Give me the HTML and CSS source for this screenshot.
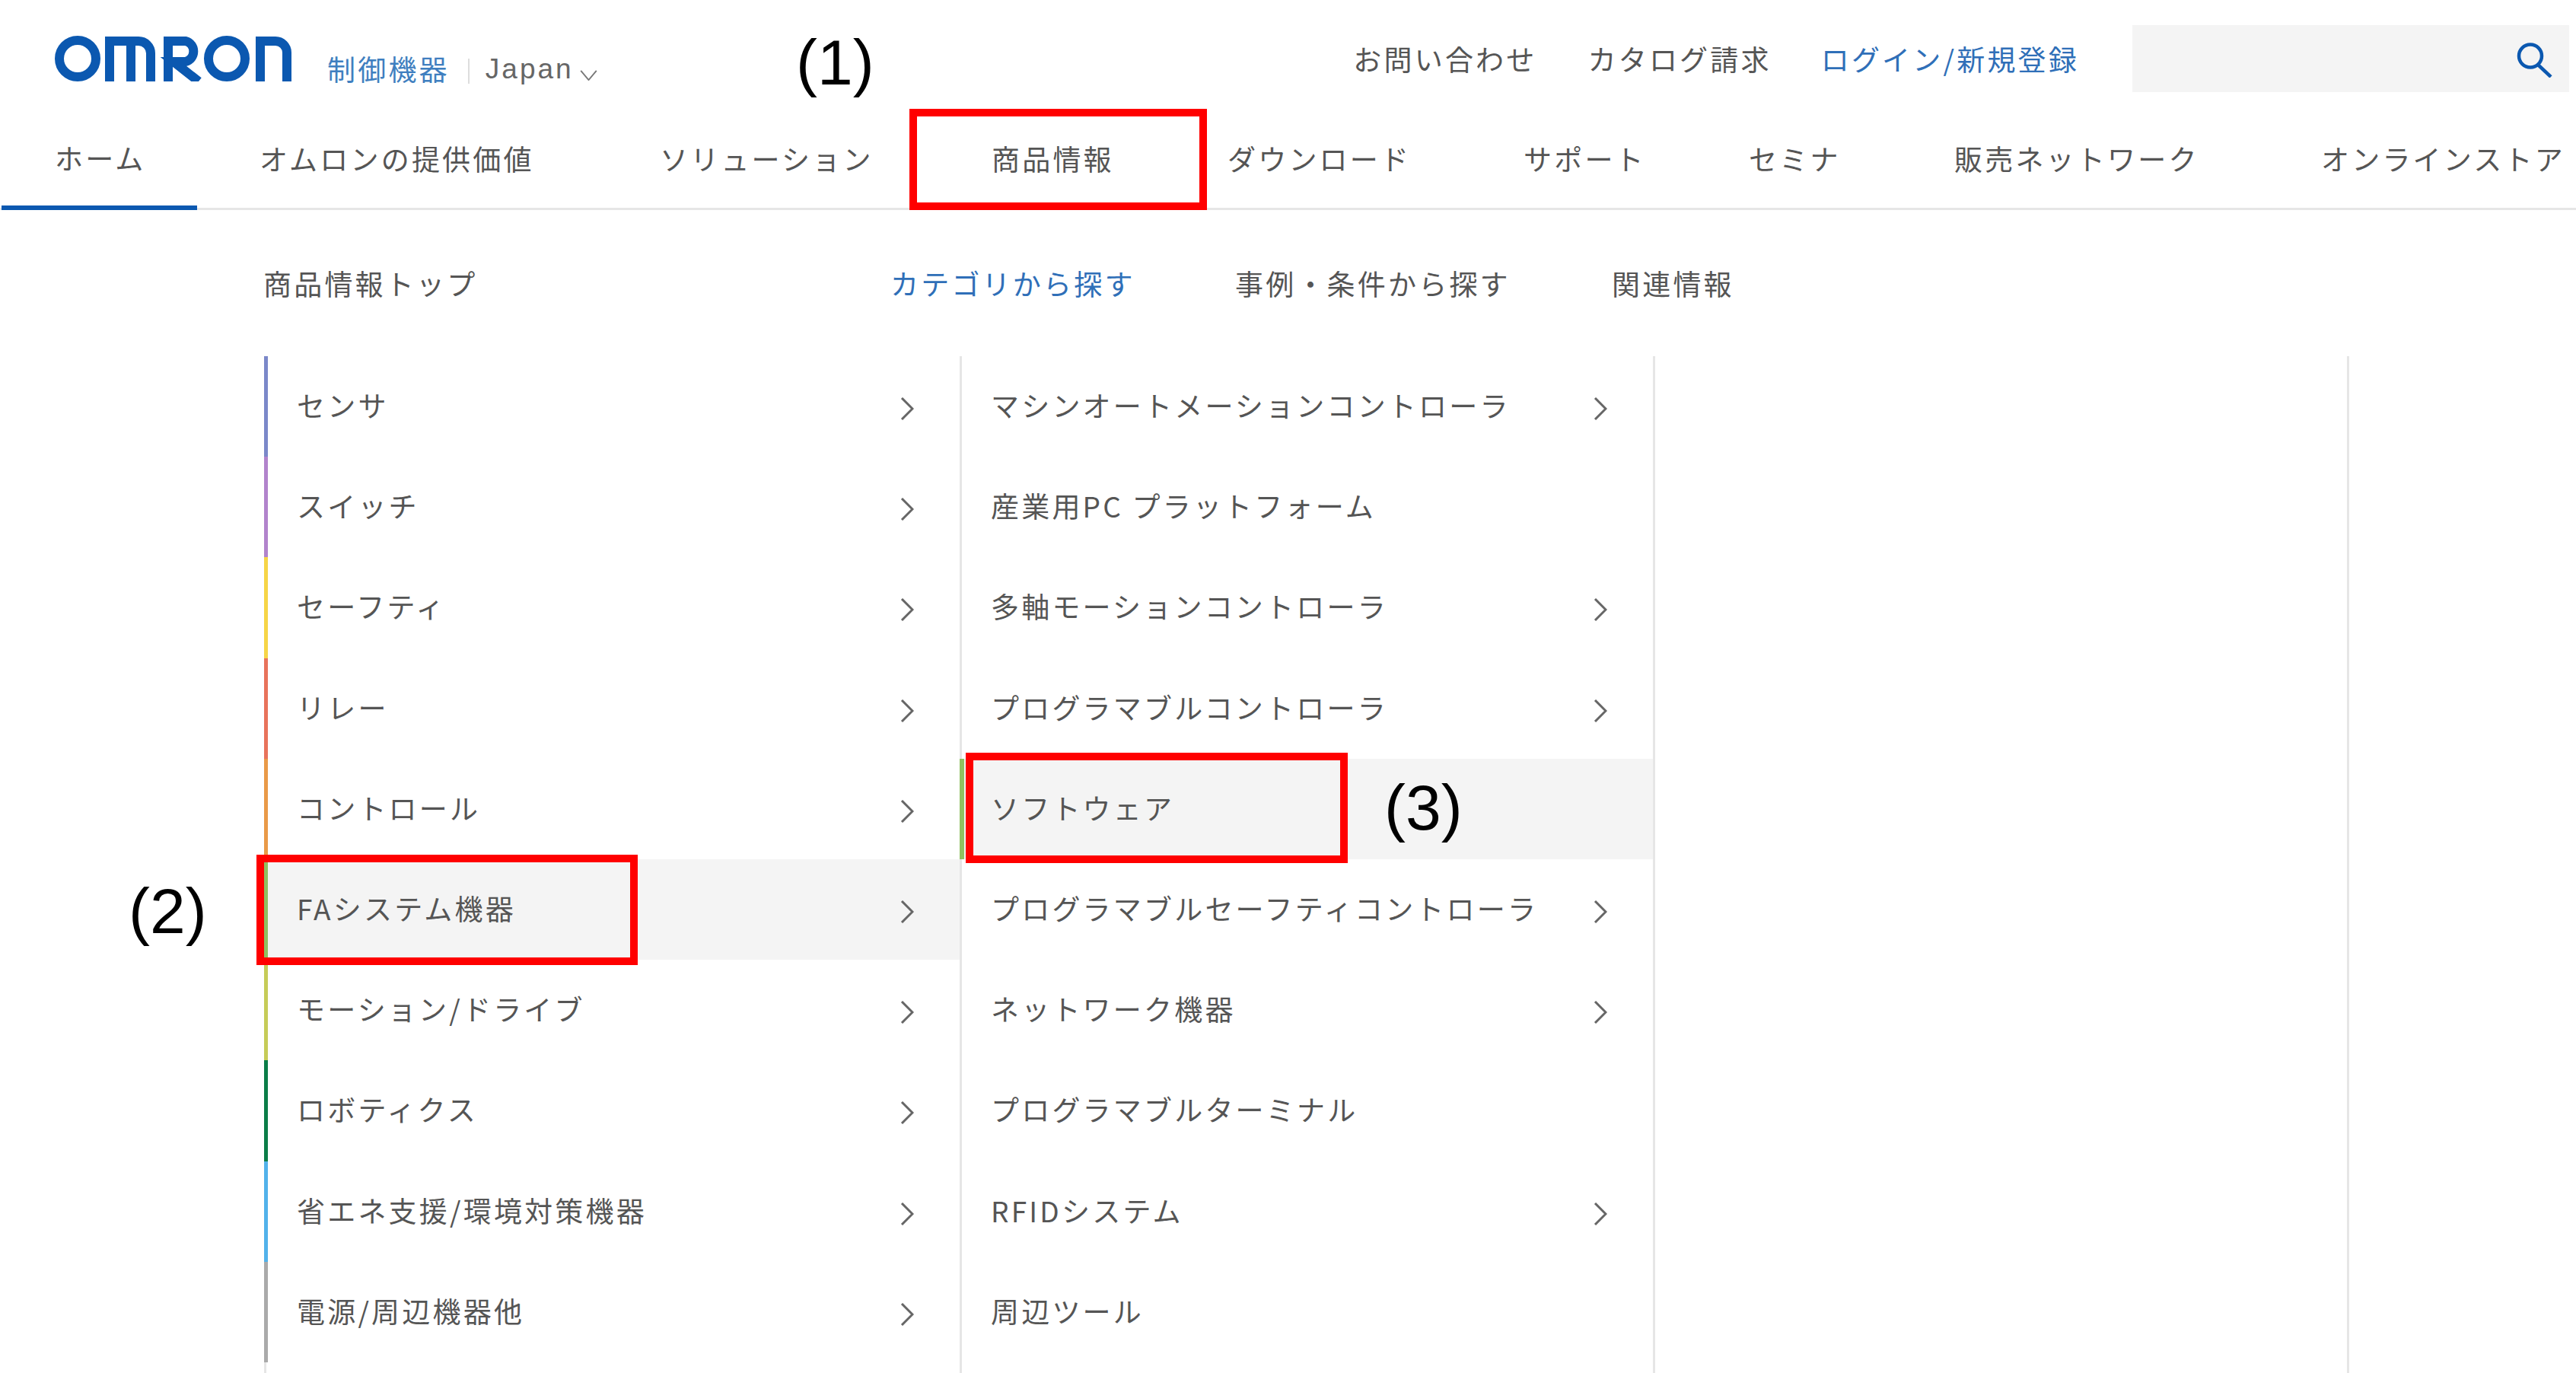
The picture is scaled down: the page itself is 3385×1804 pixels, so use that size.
FILE: index.html
```html
<!DOCTYPE html>
<html lang="ja">
<head>
<meta charset="utf-8">
<title>OMRON 制御機器</title>
<link rel="stylesheet" href="styles.css">
</head>
<body>
<div class="page">
  <header class="top">
    <div class="brand">
      <svg class="logo" viewBox="0 0 312 60" aria-label="OMRON">
        <g fill="none" stroke="#0b58b0" stroke-width="12">
          <circle cx="30" cy="30" r="24"/>
          <path d="M72 60V7H110a16 16 0 0 1 16 16V60M100 7V60"/>
          <path d="M149 60V7H172a14 14 0 0 1 0 27H156L189 60"/>
          <circle cx="226" cy="30" r="24"/>
          <path d="M270 60V7H290a15 15 0 0 1 15 15V60"/>
        </g>
      </svg>
      <span class="division">制御機器</span>
      <span class="divider"></span>
      <span class="region">Japan</span>
      <svg class="region-caret" viewBox="0 0 24 15"><path d="M1 1L12 14L23 1" fill="none" stroke="#777" stroke-width="2"/></svg>
    </div>
    <nav class="utility">
      <a class="util util-contact">お問い合わせ</a>
      <a class="util util-catalog">カタログ請求</a>
      <a class="util util-login">ログイン/新規登録</a>
      <div class="search">
        <svg class="search-icon" viewBox="0 0 48 46"><circle cx="18" cy="17.500" r="15" fill="none" stroke="#0b58b0" stroke-width="4.500"/><path d="M28 29L45 45" stroke="#0b58b0" stroke-width="4.500" fill="none"/></svg>
      </div>
    </nav>
  </header>

  <nav class="mainnav">
    <a class="nav-item nav-active">ホーム</a>
    <a class="nav-item">オムロンの提供価値</a>
    <a class="nav-item">ソリューション</a>
    <a class="nav-item">商品情報</a>
    <a class="nav-item">ダウンロード</a>
    <a class="nav-item">サポート</a>
    <a class="nav-item">セミナ</a>
    <a class="nav-item">販売ネットワーク</a>
    <a class="nav-item">オンラインストア</a>
  </nav>

  <nav class="subnav">
    <a class="sub-item">商品情報トップ</a>
    <a class="sub-item sub-active">カテゴリから探す</a>
    <a class="sub-item">事例・条件から探す</a>
    <a class="sub-item">関連情報</a>
  </nav>

  <div class="columns">
    <ul class="col col-first">
      <li class="row c-sensor"><span>センサ</span><svg class="chev" viewBox="0 0 18 30"><path d="M2 1L16 15L2 29"/></svg></li>
      <li class="row c-switch"><span>スイッチ</span><svg class="chev" viewBox="0 0 18 30"><path d="M2 1L16 15L2 29"/></svg></li>
      <li class="row c-safety"><span>セーフティ</span><svg class="chev" viewBox="0 0 18 30"><path d="M2 1L16 15L2 29"/></svg></li>
      <li class="row c-relay"><span>リレー</span><svg class="chev" viewBox="0 0 18 30"><path d="M2 1L16 15L2 29"/></svg></li>
      <li class="row c-control"><span>コントロール</span><svg class="chev" viewBox="0 0 18 30"><path d="M2 1L16 15L2 29"/></svg></li>
      <li class="row c-fa row-on"><span>FAシステム機器</span><svg class="chev" viewBox="0 0 18 30"><path d="M2 1L16 15L2 29"/></svg></li>
      <li class="row c-motion"><span>モーション/ドライブ</span><svg class="chev" viewBox="0 0 18 30"><path d="M2 1L16 15L2 29"/></svg></li>
      <li class="row c-robot"><span>ロボティクス</span><svg class="chev" viewBox="0 0 18 30"><path d="M2 1L16 15L2 29"/></svg></li>
      <li class="row c-energy"><span>省エネ支援/環境対策機器</span><svg class="chev" viewBox="0 0 18 30"><path d="M2 1L16 15L2 29"/></svg></li>
      <li class="row c-power"><span>電源/周辺機器他</span><svg class="chev" viewBox="0 0 18 30"><path d="M2 1L16 15L2 29"/></svg></li>
    </ul>
    <ul class="col col-second">
      <li class="row"><span>マシンオートメーションコントローラ</span><svg class="chev" viewBox="0 0 18 30"><path d="M2 1L16 15L2 29"/></svg></li>
      <li class="row"><span>産業用PC プラットフォーム</span></li>
      <li class="row"><span>多軸モーションコントローラ</span><svg class="chev" viewBox="0 0 18 30"><path d="M2 1L16 15L2 29"/></svg></li>
      <li class="row"><span>プログラマブルコントローラ</span><svg class="chev" viewBox="0 0 18 30"><path d="M2 1L16 15L2 29"/></svg></li>
      <li class="row c-fa row-on"><span>ソフトウェア</span></li>
      <li class="row"><span>プログラマブルセーフティコントローラ</span><svg class="chev" viewBox="0 0 18 30"><path d="M2 1L16 15L2 29"/></svg></li>
      <li class="row"><span>ネットワーク機器</span><svg class="chev" viewBox="0 0 18 30"><path d="M2 1L16 15L2 29"/></svg></li>
      <li class="row"><span>プログラマブルターミナル</span></li>
      <li class="row"><span>RFIDシステム</span><svg class="chev" viewBox="0 0 18 30"><path d="M2 1L16 15L2 29"/></svg></li>
      <li class="row"><span>周辺ツール</span></li>
    </ul>
    <div class="col col-third"></div>
    <div class="col-end"></div>
  </div>

  <div class="mark mark-one"></div>
  <div class="mark mark-two"></div>
  <div class="mark mark-three"></div>
  <div class="label label-one">(1)</div>
  <div class="label label-two">(2)</div>
  <div class="label label-three">(3)</div>
</div>
</body>
</html>
```
FILE: styles.css
```css
* { box-sizing: border-box; }
html, body { margin: 0; padding: 0; background: #fff; }
ul { list-style: none; margin: 0; padding: 0; }

.page {
  position: relative;
  width: 3385px;
  height: 1804px;
  overflow: hidden;
  font-family: "Noto Sans CJK JP", "Liberation Sans", sans-serif;
  font-size: 37px;
  letter-spacing: 3.2px;
  line-height: 44px;
  color: #555;
}

/* top bar */
.top {
  display: flex;
  justify-content: space-between;
  align-items: flex-start;
  height: 143px;
  padding: 33px 9px 0 72px;
}
.brand { display: flex; align-items: flex-start; }
.logo { display: block; width: 312px; height: 60px; margin-top: 14px; }
.division { margin: 35px 0 0 46px; color: #3f7fc0; }
.divider { width: 2px; height: 33px; margin: 44px 21px 0 24px; background: #ddd; }
.region { margin: 36px 0 0 0; font-family: "Liberation Sans", sans-serif; color: #666; letter-spacing: 3px; }
.region-caret { width: 23px; height: 14px; margin: 59px 0 0 8px; }

.utility { display: flex; align-items: center; height: 88px; }
.util-contact { margin-right: 67px; }
.util-catalog { margin-right: 65px; }
.util-login { color: #2f6fb8; margin-right: 70px; }
.search {
  display: flex;
  align-items: center;
  justify-content: flex-end;
  width: 574px;
  height: 88px;
  padding-right: 21px;
  background: #f4f4f4;
}
.search-icon { width: 48px; height: 46px; margin-top: 4px; }

/* main navigation */
.mainnav {
  display: grid;
  grid-template-columns: 269px 526px 436px 310px 389px 296px 270px 482px 1fr;
  height: 133px;
  padding-left: 2px;
  border-bottom: 3px solid #e6e6e6;
}
.nav-item {
  display: flex;
  align-items: center;
  height: 130px;
  padding: 0 0 0 70px;
  white-space: nowrap;
}
.nav-active {
  width: 257px;
  height: 133px;
  border-bottom: 6px solid #0b58b0;
}

/* sub navigation */
.subnav {
  display: grid;
  grid-template-columns: 824px 453px 495px 1fr;
  height: 192px;
  padding: 74px 0 0 346px;
}
.sub-active { color: #2f6fb8; }

/* columns */
.columns {
  display: grid;
  grid-template-columns: 914px 911px 912px 1px;
  margin-left: 347px;
  height: 1336px;
}
.col { border-left: 3px solid #e6e6e6; }
.col-end { border-left: 3px solid #e6e6e6; }
.row {
  display: flex;
  align-items: center;
  justify-content: space-between;
  height: 132.2px;
  margin-left: -3px;
  padding: 0 60px 4px 39px;
  white-space: nowrap;
  border-left-style: solid;
  border-left-width: 0;
}
.col-first .row { border-left-width: 5px; padding-left: 38px; }
.col-second .row { padding-left: 41px; }
.col-second .row.row-on { border-left-width: 6px; padding-left: 35px; }
.row-on { background: #f4f4f4; }
.chev {
  width: 18px;
  height: 30px;
  margin-top: 10px;
}
.chev path { fill: none; stroke: #666; stroke-width: 3; }

.c-sensor { border-left-color: #7b88c9; }
.c-switch { border-left-color: #b283cc; }
.c-safety { border-left-color: #f6d547; }
.c-relay { border-left-color: #e8735c; }
.c-control { border-left-color: #e99a48; }
.c-fa { border-left-color: #90c060; }
.c-motion { border-left-color: #c6cc58; }
.c-robot { border-left-color: #0b7d48; }
.c-energy { border-left-color: #52b2ea; }
.c-power { border-left-color: #aaaaaa; }

/* annotation overlays */
.mark { position: absolute; border: 10px solid #f00; }
.mark-one { left: 1195px; top: 143px; width: 391px; height: 133px; }
.mark-two { left: 337px; top: 1123px; width: 501px; height: 145px; }
.mark-three { left: 1269px; top: 989px; width: 502px; height: 145px; }
.label {
  position: absolute;
  font-family: "Liberation Sans", sans-serif;
  font-size: 84px;
  letter-spacing: 0;
  line-height: 92px;
  color: #000;
}
.label-one { left: 1046px; top: 36px; }
.label-two { left: 169px; top: 1151px; }
.label-three { left: 1819px; top: 1015px; }
```
